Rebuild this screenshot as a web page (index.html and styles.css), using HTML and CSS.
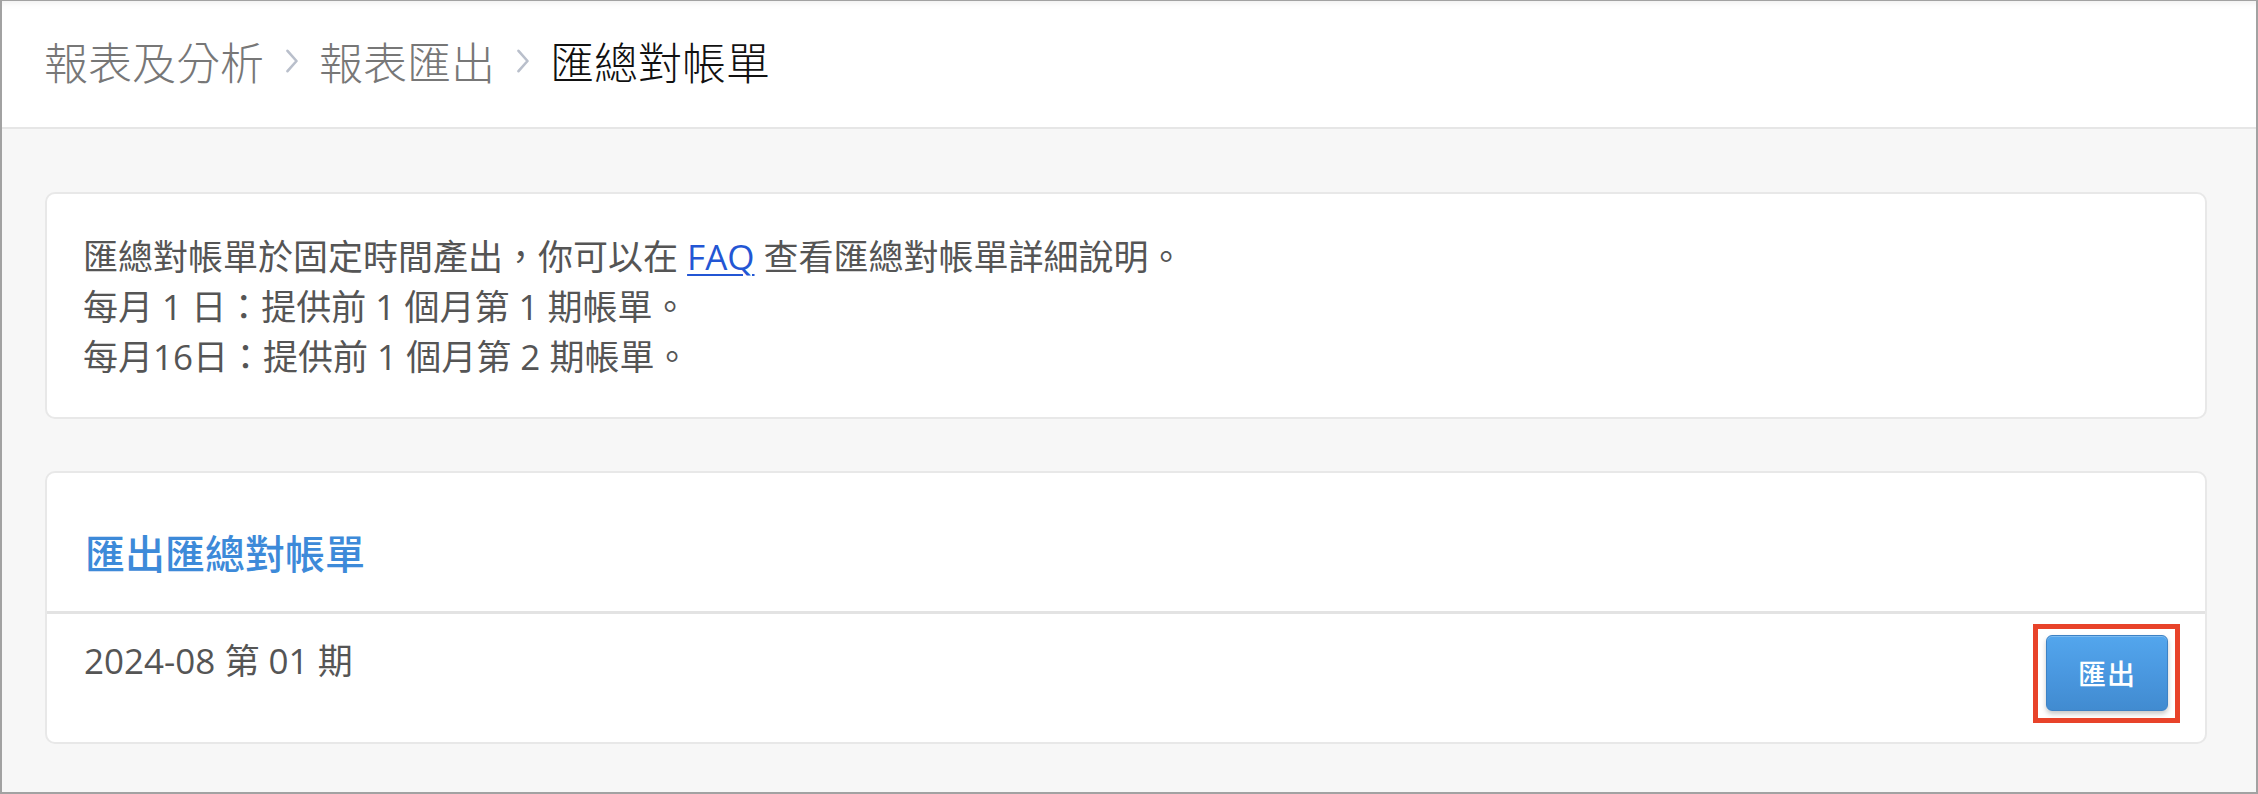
FILE: index.html
```html
<!DOCTYPE html>
<html lang="zh-Hant">
<head>
<meta charset="utf-8">
<title>匯總對帳單</title>
<link rel="stylesheet" href="styles.css">
</head>
<body>
<div class="frame">
  <header class="topbar">
    <nav class="crumbs">
      <span class="crumb">報表及分析</span>
      <svg class="chev" width="14" height="24" viewBox="0 0 14 24"><path d="M2.5 1.8 L11.5 12 L2.5 22.2" fill="none" stroke="#b9bfcb" stroke-width="2.6" stroke-linecap="round" stroke-linejoin="round"/></svg>
      <span class="crumb">報表匯出</span>
      <svg class="chev" width="14" height="24" viewBox="0 0 14 24"><path d="M2.5 1.8 L11.5 12 L2.5 22.2" fill="none" stroke="#b9bfcb" stroke-width="2.6" stroke-linecap="round" stroke-linejoin="round"/></svg>
      <span class="crumb current">匯總對帳單</span>
    </nav>
  </header>
  <main class="content">
    <section class="card info">
      <div class="line">匯總對帳單於固定時間產出，你可以在 <a class="link" href="#">FAQ</a> 查看匯總對帳單詳細說明。</div>
      <div class="line">每月 1 日：提供前 1 個月第 1 期帳單。</div>
      <div class="line">每月16日：提供前 1 個月第 2 期帳單。</div>
    </section>
    <section class="card export">
      <div class="card-head">
        <h2 class="title">匯出匯總對帳單</h2>
      </div>
      <div class="row">
        <div class="period">2024-08 第 01 期</div>
        <span class="mark"><button class="btn" type="button">匯出</button></span>
      </div>
    </section>
  </main>
</div>
</body>
</html>
```
FILE: styles.css
```css
html, body {
  margin: 0;
  padding: 0;
}
body {
  width: 2258px;
  height: 794px;
  font-family: "Open Sans", "Noto Sans CJK TC", sans-serif;
  color: #555555;
  background: #ffffff;
}
.frame {
  box-sizing: border-box;
  width: 2258px;
  height: 794px;
  border: 2px solid #a2a2a2;
  border-top-width: 1px;
  background: #f7f7f7;
  display: flex;
  flex-direction: column;
}
.topbar {
  background: #ffffff;
  border-bottom: 2px solid #e6e6e6;
  height: 128px;
  flex: none;
  box-sizing: border-box;
  padding: 30px 42px 0 42px;
  box-shadow: inset 0 8px 8px -8px rgba(0, 0, 0, 0.10);
}
.crumbs {
  display: flex;
  align-items: center;
  height: 60px;
}
.crumb {
  font-family: "Noto Sans CJK TC", sans-serif;
  font-weight: 300;
  font-size: 44px;
  line-height: 60px;
  color: #777777;
}
.crumb.current {
  color: #111111;
}
.chev {
  display: block;
  margin: 0 20px 0 21px;
}
.content {
  flex: 1;
  padding: 63px 49px 0 43px;
  display: flex;
  flex-direction: column;
  gap: 52px;
}
.card {
  background: #ffffff;
  border: 2px solid #e8e8e8;
  border-radius: 10px;
}
.info {
  padding: 38px 36px 35px 36px;
}
.line {
  font-size: 35px;
  line-height: 50px;
  color: #555555;
  white-space: nowrap;
}
.link {
  color: #2356d4;
  text-decoration: underline;
  text-underline-offset: 4px;
  text-decoration-thickness: 2px;
}
.card-head {
  padding: 51px 38px 31px 38px;
  border-bottom: 3px solid #e3e3e3;
}
.title {
  margin: 0;
  font-family: "Noto Sans CJK TC", sans-serif;
  font-weight: 500;
  font-size: 40px;
  line-height: 56px;
  color: #3d8ad9;
}
.row {
  display: flex;
  justify-content: space-between;
  align-items: flex-start;
  padding: 10px 25px 19px 37px;
}
.period {
  padding-top: 12px;
  font-size: 35px;
  line-height: 50px;
  color: #555555;
}
.mark {
  display: inline-block;
  border: 5px solid #e8432a;
  padding: 6px 7px 7px 8px;
  line-height: 0;
}
.btn {
  width: 122px;
  height: 76px;
  box-sizing: border-box;
  border: 1px solid #3d82c5;
  border-radius: 6px;
  background: linear-gradient(to bottom, #53a6ed 0%, #4a98e0 50%, #418bd0 100%);
  box-shadow: 0 3px 5px rgba(0, 0, 0, 0.22), inset 0 1px 0 rgba(255, 255, 255, 0.25);
  color: #ffffff;
  font-family: "Noto Sans CJK TC", sans-serif;
  font-weight: 500;
  font-size: 28px;
  line-height: 1;
  padding: 0;
  letter-spacing: 1px;
  cursor: pointer;
}
```
